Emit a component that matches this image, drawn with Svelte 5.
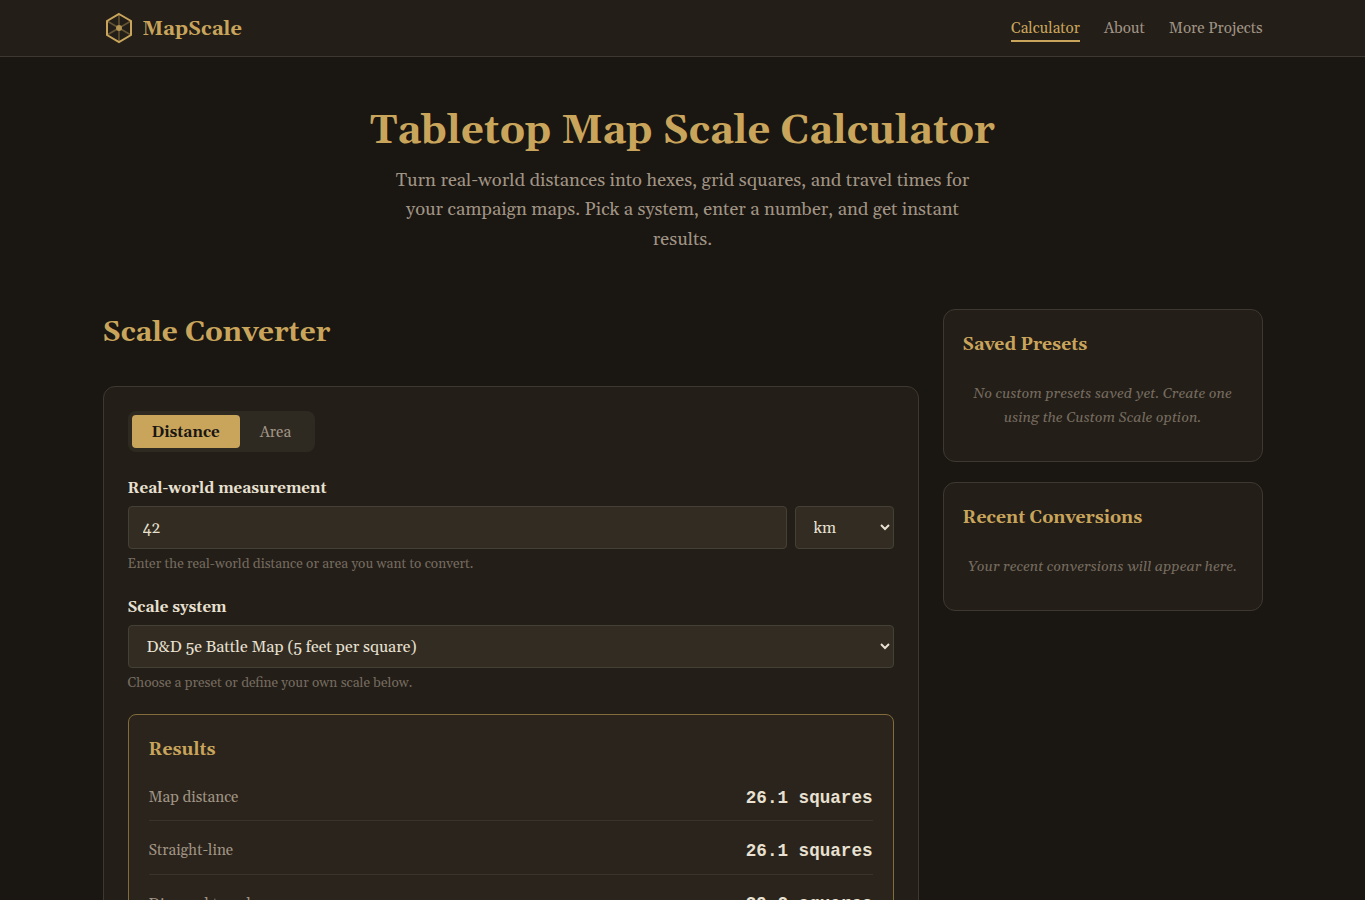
<script lang="ts">
	type Mode = 'distance' | 'area';

	let mode = $state<Mode>('distance');
	let amount = $state('42');
	let unit = $state('km');
	let system = $state('dnd5e');

	const links = [
		{ label: 'Calculator', active: true },
		{ label: 'About', active: false },
		{ label: 'More Projects', active: false }
	];

	const results = [
		{ label: 'Map distance', value: '26.1 squares' },
		{ label: 'Straight-line', value: '26.1 squares' },
		{ label: 'Diagonal travel', value: '39.2 squares' }
	];
</script>

<div class="page">
	<header class="site-header">
		<div class="header-inner">
			<a class="logo" href="#top">
				<svg width="32" height="32" viewBox="0 0 32 32" fill="none" aria-hidden="true">
					<path d="M16 2 L28 9 V23 L16 30 L4 23 V9 Z" stroke="currentColor" stroke-width="2" />
					<path d="M16 2 V30 M4 9 L28 23 M28 9 L4 23" stroke="currentColor" stroke-width="1.5" opacity="0.4" />
					<circle cx="16" cy="16" r="3" fill="currentColor" opacity="0.8" />
				</svg>
				<span>MapScale</span>
			</a>
			<nav>
				{#each links as link}
					<a href="#top" class:active={link.active}>{link.label}</a>
				{/each}
			</nav>
		</div>
	</header>

	<section class="hero">
		<h1>Tabletop Map Scale Calculator</h1>
		<p>
			Turn real-world distances into hexes, grid squares, and travel times for your campaign maps. Pick a
			system, enter a number, and get instant results.
		</p>
	</section>

	<main class="layout">
		<section>
			<h2>Scale Converter</h2>
			<div class="card converter">
				<div class="toggle">
					<button class:active={mode === 'distance'} onclick={() => (mode = 'distance')}>Distance</button>
					<button class:active={mode === 'area'} onclick={() => (mode = 'area')}>Area</button>
				</div>

				<div class="field">
					<label for="amount">Real-world measurement</label>
					<div class="input-row">
						<input id="amount" type="text" bind:value={amount} />
						<select bind:value={unit} aria-label="Unit">
							<option value="km">km</option>
							<option value="mi">miles</option>
							<option value="ft">feet</option>
						</select>
					</div>
					<p class="hint">Enter the real-world distance or area you want to convert.</p>
				</div>

				<div class="field">
					<label for="system">Scale system</label>
					<select id="system" bind:value={system}>
						<option value="dnd5e">D&amp;D 5e Battle Map (5 feet per square)</option>
						<option value="custom">Custom Scale</option>
					</select>
					<p class="hint">Choose a preset or define your own scale below.</p>
				</div>

				<div class="results">
					<h3>Results</h3>
					{#each results as row}
						<div class="result-row">
							<span>{row.label}</span>
							<strong>{row.value}</strong>
						</div>
					{/each}
				</div>
			</div>
		</section>

		<aside>
			<div class="card side-card">
				<h3>Saved Presets</h3>
				<p>No custom presets saved yet. Create one using the Custom Scale option.</p>
			</div>
			<div class="card side-card">
				<h3>Recent Conversions</h3>
				<p>Your recent conversions will appear here.</p>
			</div>
		</aside>
	</main>
</div>

<style>
	:global(body) {
		background: #1a1612;
		overflow: hidden;
	}

	.page {
		--gold: #c9a55c;
		--text: #e8e0d0;
		--muted: #a09484;
		--dim: #756b5f;
		--surface: #231e18;
		--raised: #322c23;
		--line: #3e3930;
		height: 900px;
		overflow: hidden;
		background: #1a1612;
		color: var(--text);
		font-family: Georgia, Gelasio, 'Liberation Serif', serif;
		font-size: 16px;
		line-height: 1.6;
	}

	.page * {
		box-sizing: border-box;
	}

	h1, h2, h3, p {
		margin: 0;
	}

	h1, h2, h3 {
		color: var(--gold);
		font-weight: 700;
	}

	.site-header {
		height: 57px;
		background: var(--surface);
		border-bottom: 1px solid var(--line);
	}

	.header-inner,
	.layout {
		max-width: 1200px;
		margin: 0 auto;
		padding: 0 20px;
	}

	.header-inner {
		height: 56px;
		display: flex;
		align-items: center;
		justify-content: space-between;
	}

	.logo {
		display: flex;
		align-items: center;
		gap: 8px;
		color: var(--gold);
		font-size: 20px;
		font-weight: 700;
		text-decoration: none;
	}

	.logo span {
		padding-top: 1px;
	}

	nav {
		display: flex;
		gap: 24px;
	}

	nav a {
		padding: 4px 0 1px;
		color: var(--muted);
		font-size: 15.2px;
		line-height: 20px;
		text-decoration: none;
		border-bottom: 2px solid transparent;
	}

	nav a.active {
		color: var(--gold);
		border-color: var(--gold);
	}

	.hero {
		padding: 50px 20px 0;
		height: 252px;
		text-align: center;
	}

	.hero h1 {
		font-size: 40px;
		line-height: 50px;
		white-space: nowrap;
	}

	.hero p {
		width: 600px;
		margin: 9px auto 0;
		color: var(--muted);
		font-size: 18.4px;
	}

	.layout {
		display: grid;
		grid-template-columns: 1fr 320px;
		gap: 24px;
	}

	h2 {
		margin-bottom: 28px;
		font-size: 28px;
		line-height: 49px;
	}

	.card {
		background: var(--surface);
		border: 1px solid var(--line);
		border-radius: 12px;
	}

	.converter {
		padding: 24px;
	}

	.toggle {
		display: inline-flex;
		height: 41px;
		padding: 4px;
		background: #2e2921;
		border-radius: 8px;
		margin-bottom: 24px;
		vertical-align: top;
	}

	.toggle button {
		padding: 3px 20px 0;
		border: 0;
		border-radius: 4px;
		background: none;
		color: var(--muted);
		font: inherit;
		font-size: 15.2px;
	}

	.toggle button.active {
		background: var(--gold);
		color: #1a1612;
		font-weight: 700;
	}

	.field {
		margin-bottom: 20px;
	}

	label {
		display: block;
		margin-bottom: 4px;
		font-size: 15.2px;
		font-weight: 700;
		line-height: 26px;
	}

	.input-row {
		display: grid;
		grid-template-columns: 1fr 99px;
		gap: 8px;
	}

	input,
	select {
		width: 100%;
		height: 43px;
		padding: 0 14px;
		background: var(--raised);
		border: 1px solid #454036;
		border-radius: 4px;
		color: var(--text);
		font: inherit;
		font-size: 16px;
	}

	select {
		display: block;
	}

	.hint {
		margin-top: 4px;
		color: var(--dim);
		font-size: 13.6px;
		line-height: 22px;
	}

	.results {
		padding: 20px;
		background: #2b241c;
		border: 1px solid #836c3b;
		border-radius: 8px;
	}

	.results h3 {
		margin-bottom: 3px;
		font-size: 17.6px;
		line-height: 30px;
	}

	.result-row {
		display: flex;
		align-items: center;
		justify-content: space-between;
		height: 53.3px;
		padding-top: 7px;
		border-bottom: 1px solid #39332b;
		color: var(--muted);
		font-size: 15.2px;
	}

	.result-row span {
		padding-top: 1px;
	}

	.result-row strong {
		color: var(--text);
		font-family: 'Courier New', 'Liberation Mono', monospace;
		font-size: 17.6px;
	}

	aside {
		display: flex;
		flex-direction: column;
		gap: 20px;
	}

	.side-card {
		padding: 20px 19px 19px;
	}

	.side-card h3 {
		margin-bottom: 12px;
		font-size: 17.6px;
		line-height: 30px;
	}

	.side-card p {
		padding: 10px 0 12px;
		color: var(--dim);
		font-size: 14.4px;
		font-style: italic;
		line-height: 24px;
		text-align: center;
	}
</style>
